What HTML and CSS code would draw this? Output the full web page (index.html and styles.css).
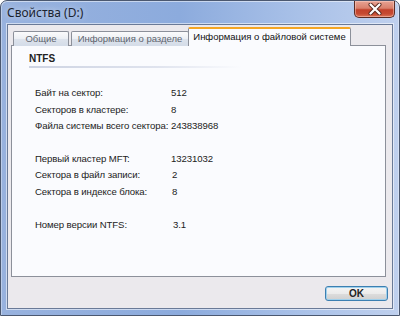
FILE: index.html
```html
<!DOCTYPE html>
<html lang="ru">
<head>
    <meta charset="UTF-8">
    <title>Свойства (D:)</title>
    <link rel="stylesheet" href="styles.css">
</head>
<body>
    <div class="window">
        <div class="titlebar">
            <span class="title">Свойства (D:)</span>
            <div class="close">
                <svg width="16" height="12" viewBox="0 0 16 12">
                    <path d="M3.5 1.5 L12.5 10.5 M12.5 1.5 L3.5 10.5" stroke="#5a2a20" stroke-width="4" stroke-linecap="round"/>
                    <path d="M3.5 1.5 L12.5 10.5 M12.5 1.5 L3.5 10.5" stroke="#ffffff" stroke-width="2.2" stroke-linecap="round"/>
                </svg>
            </div>
        </div>

        <div class="client">
            <div class="tabs">
                <div class="tab">Общие</div>
                <div class="tab tab-wide">Информация о разделе</div>
                <div class="tab tab-active">Информация о файловой системе</div>
            </div>

            <div class="panel">
                <div class="heading">NTFS</div>
                <div class="heading-line"></div>

                <div class="group g1">
                    <div class="label">Байт на сектор:</div>
                    <div class="value">512</div>
                    <div class="label">Секторов в кластере:</div>
                    <div class="value">8</div>
                    <div class="label">Файла системы всего сектора:</div>
                    <div class="value">243838968</div>
                </div>

                <div class="group g2">
                    <div class="label">Первый кластер MFT:</div>
                    <div class="value">13231032</div>
                    <div class="label">Сектора в файл записи:</div>
                    <div class="value v-shift">2</div>
                    <div class="label">Сектора в индексе блока:</div>
                    <div class="value v-shift">8</div>
                </div>

                <div class="group g3">
                    <div class="label">Номер версии NTFS:</div>
                    <div class="value">3.1</div>
                </div>
            </div>

            <div class="buttons">
                <button class="btn">OK</button>
            </div>
        </div>
    </div>
</body>
</html>
```

FILE: styles.css
```css
body {
    margin: 0;
    width: 400px;
    height: 316px;
    overflow: hidden;
    font-family: "Liberation Sans", Arial, sans-serif;
}

.window {
    box-sizing: border-box;
    height: 316px;
    display: flex;
    flex-direction: column;
    padding: 0 6px 6px 6px;
    border: 1px solid #4b5870;
    border-radius: 7px 7px 0 0;
    background: linear-gradient(to right, #98b2de 0%, #8cabdd 45%, #a9c1e8 75%, #bfd0ee 100%);
    box-shadow: inset 0 1px 0 rgba(255,255,255,0.5), inset 1px 0 0 rgba(255,255,255,0.35), inset -1px 0 0 rgba(255,255,255,0.35);
}

.titlebar {
    height: 23px;
    display: flex;
    align-items: flex-start;
    justify-content: space-between;
}

.title {
    margin-top: 4px;
    font-family: "Noto Sans", sans-serif;
    font-size: 12px;
    line-height: 16px;
    color: #1b2430;
    text-shadow: 0 0 6px rgba(255,255,255,0.7);
}

.close {
    width: 41px;
    height: 17px;
    margin-right: -2px;
    box-sizing: border-box;
    border: 1px solid #5b2c24;
    border-top: none;
    border-radius: 0 0 5px 5px;
    background: linear-gradient(to bottom, #e7a394 0%, #d9806c 45%, #c2412b 55%, #c64a32 80%, #dc7558 100%);
    box-shadow: inset 0 0 0 1px rgba(255,220,210,0.45);
    display: flex;
    align-items: center;
    justify-content: center;
}

.client {
    flex: 1;
    display: flex;
    flex-direction: column;
    background: #ebe9ed;
    border: 1px solid #6a7a97;
    box-shadow: 0 0 0 1px rgba(255,255,255,0.55);
    padding: 2px 6px 0 3px;
}

.tabs {
    display: flex;
    align-items: flex-end;
    height: 18px;
    padding-left: 2px;
    position: relative;
    z-index: 1;
}

.tab {
    box-sizing: border-box;
    width: 56px;
    height: 15px;
    margin-right: 2px;
    margin-bottom: -1px;
    border: 1px solid #8c909a;
    border-bottom: none;
    border-radius: 2px 2px 0 0;
    background: linear-gradient(to bottom, #fbfbfc 0%, #eceff4 50%, #dde3ec 51%, #d4dce8 100%);
    font-size: 9.5px;
    line-height: 14px;
    color: #60656e;
    text-align: center;
    white-space: nowrap;
}

.tab-wide {
    width: 118px;
    margin-right: 0;
}

.tab-active {
    width: 163px;
    height: 19px;
    margin-left: -1px;
    border-top: 2px solid #f5a623;
    background: #fafbfe;
    color: #111;
    line-height: 15px;
    border-color: #8c909a;
    border-top-color: #f5a623;
}

.panel {
    box-sizing: border-box;
    height: 232px;
    background: #fafbfe;
    border: 1px solid #8c909a;
    padding: 7px 0 0 17px;
    color: #222;
    font-size: 9.6px;
}

.heading {
    font-weight: bold;
    font-size: 10px;
    line-height: 12px;
}

.heading-line {
    width: 212px;
    height: 2px;
    margin-top: 1px;
    background: linear-gradient(to right, #cdd3e2 0%, #dfe3ee 60%, rgba(250,251,254,0) 100%);
}

.group {
    display: grid;
    grid-template-columns: 136px auto;
    line-height: 16.5px;
    margin-left: 6px;
    white-space: nowrap;
    letter-spacing: -0.1px;
}

.g1 {
    margin-top: 17px;
}

.g2 {
    margin-top: 16px;
}

.g3 {
    margin-top: 16.5px;
    grid-template-columns: 138px auto;
}

.v-shift {
    padding-left: 1px;
}

.buttons {
    display: flex;
    justify-content: flex-end;
    padding-top: 9px;
    margin-right: -2px;
}

.btn {
    box-sizing: border-box;
    width: 63px;
    height: 15px;
    padding: 0;
    border: 1px solid #3c7fb1;
    border-radius: 3px;
    background: linear-gradient(to bottom, #f4f4f4 0%, #ebebeb 50%, #dddddd 51%, #cfcfcf 100%);
    box-shadow: inset 0 0 0 1px #9fd0ec;
    font-family: "Liberation Sans", Arial, sans-serif;
    font-size: 10px;
    font-weight: bold;
    line-height: 12px;
    color: #222;
}
```
